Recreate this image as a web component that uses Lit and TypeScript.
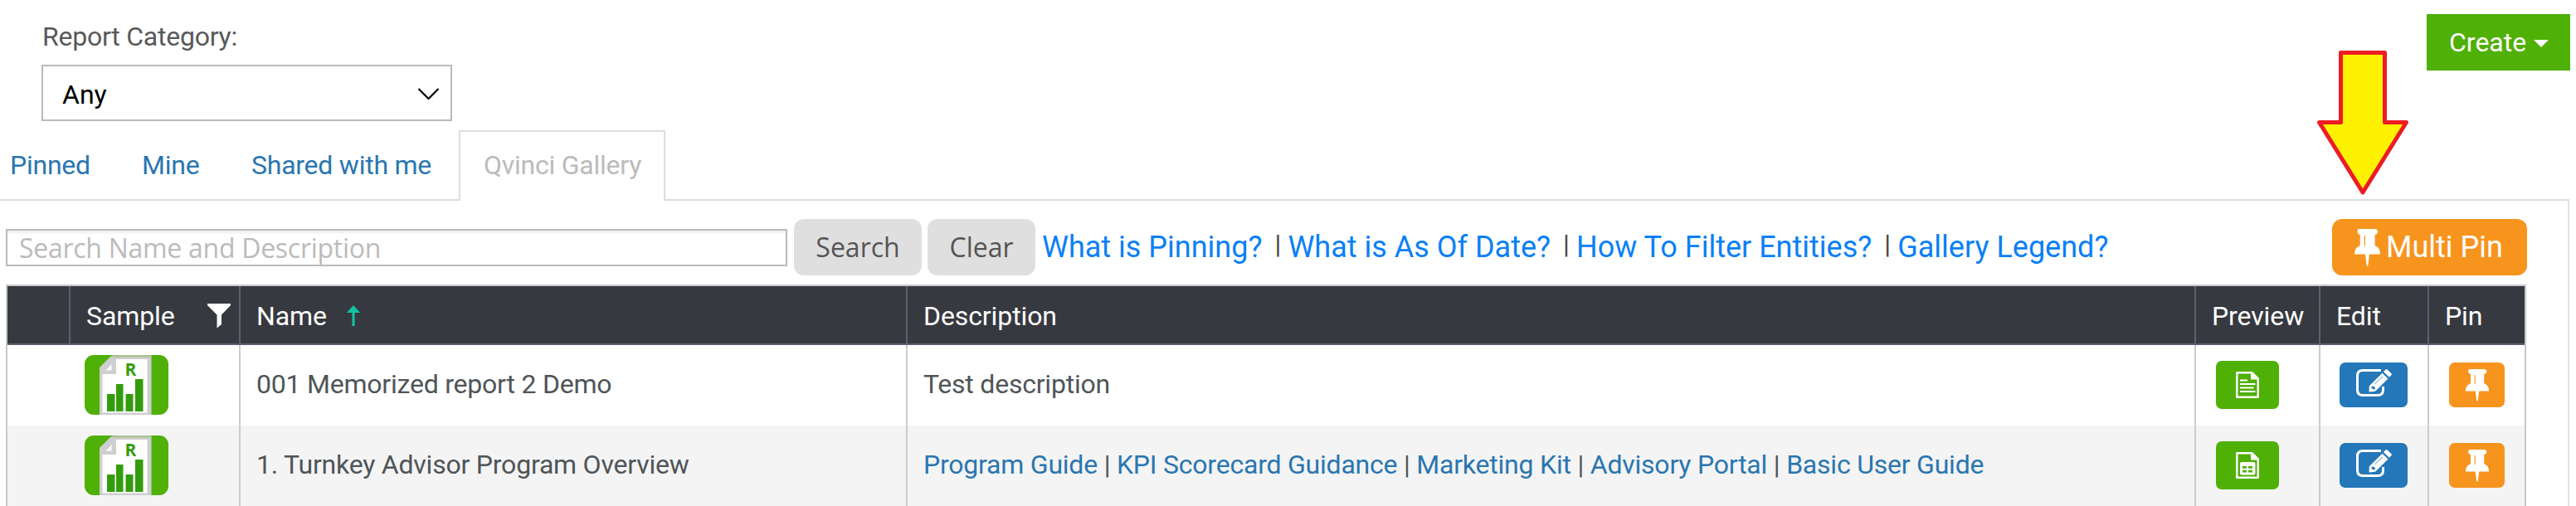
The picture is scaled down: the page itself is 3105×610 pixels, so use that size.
import { LitElement, html, css, svg } from "lit";
import { customElement } from "lit/decorators.js";

const pinShape = svg`
  <path fill="#fff" fill-rule="evenodd" d="M5 0H24C27 0 28 1.2 28 3.2S27 6.5 24.6 6.8V20C28.5 21.600 31 24.500 31 30.500H18L16.300 44.500H14.700L13 30.500H0C0 24.500 3 21.600 6.700 20V6.800C4.500 6.500 3.500 5.200 3.500 3.200S4.300 0 5 0ZM11.800 8V20.500H13V8Z"/>`;

const pinIcon = (w: number, h: number) =>
  html`<svg width=${w} height=${h} viewBox="0 0 31 45" preserveAspectRatio="none">${pinShape}</svg>`;

const sampleIcon = html`
  <svg class="sample-icon" width="101" height="72" viewBox="0 0 101 72">
    <rect width="101" height="72" rx="11" fill="#4fb006"/>
    <path d="M18 72V15L32 1H80.500V72Z" fill="#cfcfcf"/>
    <path d="M34 0H80.500V2.500H31Z" fill="#a9c492"/>
    <path d="M21.500 69.500V23H38V5H75.500V69.500Z" fill="#fff"/>
    <path d="M25.500 18.500L32.500 11V18.500Z" fill="#fff"/>
    <text x="48.500" y="25" class="sample-letter">R</text>
    <path d="M27 47H36.500V68H27ZM38 35H46.500V68H38ZM49.500 47H58.500V68H49.500ZM61 29H70.500V68H61Z" fill="#349c0c"/>
  </svg>`;

const docFrame = svg`
  <path fill="#fff" fill-rule="evenodd" d="M1.500 0H20L28 8V30.500Q28 32 26.500 32H1.500Q0 32 0 30.500V1.500Q0 0 1.500 0ZM2.500 2.500V29.500H25.500V9.500H18V2.500Z"/>`;
const docIcon = html`
  <svg width="28" height="32" viewBox="0 0 28 32">${docFrame}
    <path d="M5 10.500H14M5 15H23.500M5 19.500H21.500M5 24H23.500" stroke="#fff" stroke-width="2.200"/>
  </svg>`;
const gridIcon = html`
  <svg width="28" height="32" viewBox="0 0 28 32">${docFrame}
    <path fill="#fff" fill-rule="evenodd" d="M7 12H21.500Q23.500 12 23.500 14V25.500Q23.500 27.500 21.500 27.500H7Q5 27.500 5 25.500V14Q5 12 7 12ZM8 17V19.800H13V17ZM15 17V19.800H20V17ZM8 21.800V24.500H13V21.800ZM15 21.800V24.500H20V21.800Z"/>
  </svg>`;
const editIcon = html`
  <svg width="43" height="33" viewBox="0 0 43 33">
    <path d="M30 1.500H8Q1.500 1.500 1.500 8V25Q1.500 31.500 8 31.500H26Q32.500 31.500 32.500 25V21" fill="none" stroke="#fff" stroke-width="3"/>
    <path fill="#fff" d="M35.500 .5Q36.500-.3 37.500 .5L42.300 5Q43.300 6 42.300 7.200L40 9.800L33 3.200Z"/>
    <path fill="#fff" fill-rule="evenodd" d="M31.500 4.800L38.500 11.400L23 26.800L15.500 27.500L15.800 20.300ZM19 20.500L18.300 22.500L20.500 24.500L22.800 23.800L22.500 21.300Z"/>
    <path d="M22.500 17.800L32 8.800" stroke="#2477b8" stroke-width=".8"/>
  </svg>`;

interface Row { name: string; links?: string[]; text?: string; preview: unknown; }
const rows: Row[] = [
  { name: "001 Memorized report 2 Demo", text: "Test description", preview: docIcon },
  {
    name: "1. Turnkey Advisor Program Overview",
    links: ["Program Guide", "KPI Scorecard Guidance", "Marketing Kit", "Advisory Portal", "Basic User Guide"],
    preview: gridIcon,
  },
];
const help = ["What is Pinning?", "What is As Of Date?", "How To Filter Entities?", "Gallery Legend?"];

@customElement("app-root")
export class AppRoot extends LitElement {
  static styles = css`
    :host { display: block; position: relative; height: 610px; overflow: hidden; background: #fff;
      font: 32px/38px Roboto, sans-serif; color: #4f5558; }
    * { box-sizing: border-box; }
    svg { display: block; flex: none; }
    .top { display: flex; justify-content: space-between; align-items: flex-start; height: 157px; padding: 17px 7px 0 50px; }
    .label { padding: 8px 0 0 1px; color: #58595b; letter-spacing: -.24px; }
    .select { display: flex; align-items: center; justify-content: space-between; width: 495px; height: 68px; margin-top: 15px;
      border: 2px solid #bbb; padding: 3px 13px 0 23px; color: #000; }
    .create { display: flex; align-items: center; gap: 9px; width: 173px; height: 68px; padding: 0 0 0 27px; background: #4fb006; color: #fff; }
    .caret { border: 9px solid transparent; border-top-color: #fff; border-bottom: 0; margin-top: 2px; }
    .arrow { position: absolute; left: 2790px; top: 58px; }
    .tabs { display: flex; height: 85px; width: 3097px; letter-spacing: -.24px; }
    .tab { padding: 23px 31px 0; border-bottom: 2px solid #ddd; color: #2a76b0; white-space: nowrap; }
    .tab.pinned { width: 140px; padding-left: 12px; }
    .tab.mine { width: 132px; }
    .tab.shared { width: 281px; }
    .tab.active { width: 249px; padding: 21px 0 0 28px; border: 2px solid #ddd; border-bottom: 0; color: #bbb; }
    .tab-rest { flex: 1; border-bottom: 2px solid #ddd; }
    .panel { width: 3097px; height: 368px; border-right: 2px solid #e2e2e2; padding: 22px 50px 0 7px; }
    .toolbar { display: flex; align-items: center; height: 68px; }
    .search { width: 942px; height: 45px; border: 2px solid #bbb; padding: 0 14px; color: #bbb; box-shadow: inset 0 3px 3px #eee;
      font: 32px/41px "Open Sans", sans-serif; letter-spacing: -.28px; margin-right: 8px; }
    .btn { height: 68px; border-radius: 12px; background: #dfdfdf; color: #555; font: 32px/68px "Open Sans", sans-serif; text-align: center; margin-right: 7px; }
    .btn.find { width: 154px; }
    .btn.clear { width: 130px; margin-right: 8px; }
    .help { display: flex; flex: 1; font-size: 36px; line-height: 44px; color: #0b80f5; white-space: nowrap; }
    .bar { font-size: 32px; color: #4b4540; line-height: 36px; width: 31px; padding-left: 15px; }
    .multi { display: flex; align-items: center; width: 235px; height: 68px; margin-right: -1px; border-radius: 12px; background: #f7941e; color: #fff;
      font-size: 36px; padding-left: 27px; gap: 7px; white-space: nowrap; }
    .table { width: 3038px; margin-top: 11px; border: 2px solid #c6c8ca; border-bottom: 0; }
    .row { display: grid; grid-template-columns: 76px 205px 804px 1553px 150px 131px 115px; height: 97px; }
    .row.head { height: 71px; background: #373940; color: #fff; border-bottom: 2px solid #5d5f6e; letter-spacing: -.1px; }
    .row.odd { background: #f4f4f4; }
    .cell { display: flex; align-items: center; border-right: 2px solid #ccc; white-space: pre; padding-bottom: 1px; }
    .cell:last-child { border-right: 0; }
    .head .cell { border-color: #5d5f6e; padding: 2px 0 0 19px; }
    .body .cell:first-child { border: 0; }
    .body .name, .body .desc { padding: 0 0 3px 19px; letter-spacing: -.22px; }
    .sample { padding-left: 17px; }
    .sample-letter { font: bold 21px "Open Sans", sans-serif; fill: #349c0c; }
    .filter { margin-left: 39px; }
    .sort { margin-left: 24px; }
    .link { color: #2a76b0; }
    .action { display: flex; align-items: center; justify-content: center; border-radius: 7px; }
    .action.preview { width: 76px; height: 58px; margin-left: 24px; background: #4fb006; }
    .action.edit { width: 82px; height: 54px; margin-left: 23px; padding-bottom: 5px; background: #2477b8; }
    .action.pin { width: 67px; height: 54px; margin-left: 24px; background: #f7941e; }
  `;

  render() {
    return html`
      <div class="top">
        <div>
          <div class="label">Report Category:</div>
          <div class="select">Any
            <svg width="27" height="15" viewBox="0 0 27 15"><path d="M1.500 1L13.500 13L25.500 1" fill="none" stroke="#000" stroke-width="2.200"/></svg>
          </div>
        </div>
        <div class="create">Create<span class="caret"></span></div>
      </div>
      <div class="tabs">
        <div class="tab pinned">Pinned</div>
        <div class="tab mine">Mine</div>
        <div class="tab shared">Shared with me</div>
        <div class="tab active">Qvinci Gallery</div>
        <div class="tab-rest"></div>
      </div>
      <div class="panel">
        <div class="toolbar">
          <div class="search">Search Name and Description</div>
          <div class="btn find">Search</div>
          <div class="btn clear">Clear</div>
          <div class="help">${help.map((h, i) => html`${i ? html`<span class="bar">|</span>` : ""}<span>${h}</span>`)}</div>
          <div class="multi">${pinIcon(31, 45)}<span>Multi Pin</span></div>
        </div>
        <div class="table">
          <div class="row head">
            <div class="cell"></div>
            <div class="cell">Sample<svg class="filter" width="28" height="30" viewBox="0 0 28 30"><path d="M0 0H28V2L17 13.500V25L11.500 29.500V13.500L0 2Z" fill="#fff"/></svg></div>
            <div class="cell">Name<svg class="sort" width="16" height="25" viewBox="0 0 16 25"><path d="M8 0L16 9H9.500V25H6.500V9H0Z" fill="#13c4a3"/></svg></div>
            <div class="cell">Description</div>
            <div class="cell">Preview</div>
            <div class="cell">Edit</div>
            <div class="cell">Pin</div>
          </div>
          ${rows.map((r, i) => html`
            <div class="row body ${i % 2 ? "odd" : ""}">
              <div class="cell"></div>
              <div class="cell sample">${sampleIcon}</div>
              <div class="cell name">${r.name}</div>
              <div class="cell desc">${r.links ? r.links.map((l, j) => html`${j ? html`<span> | </span>` : ""}<span class="link">${l}</span>`) : r.text}</div>
              <div class="cell"><div class="action preview">${r.preview}</div></div>
              <div class="cell"><div class="action edit">${editIcon}</div></div>
              <div class="cell"><div class="action pin">${pinIcon(28, 39)}</div></div>
            </div>`)}
        </div>
      </div>
      <svg class="arrow" width="117" height="180" viewBox="2790 58 117 180">
        <path d="M2821.500 63.500H2874.500V147.500H2900.500L2848 232L2795.500 147.500H2821.500Z" fill="#fff200" stroke="#ec1c24" stroke-width="5" stroke-linejoin="round"/>
      </svg>`;
  }
}
